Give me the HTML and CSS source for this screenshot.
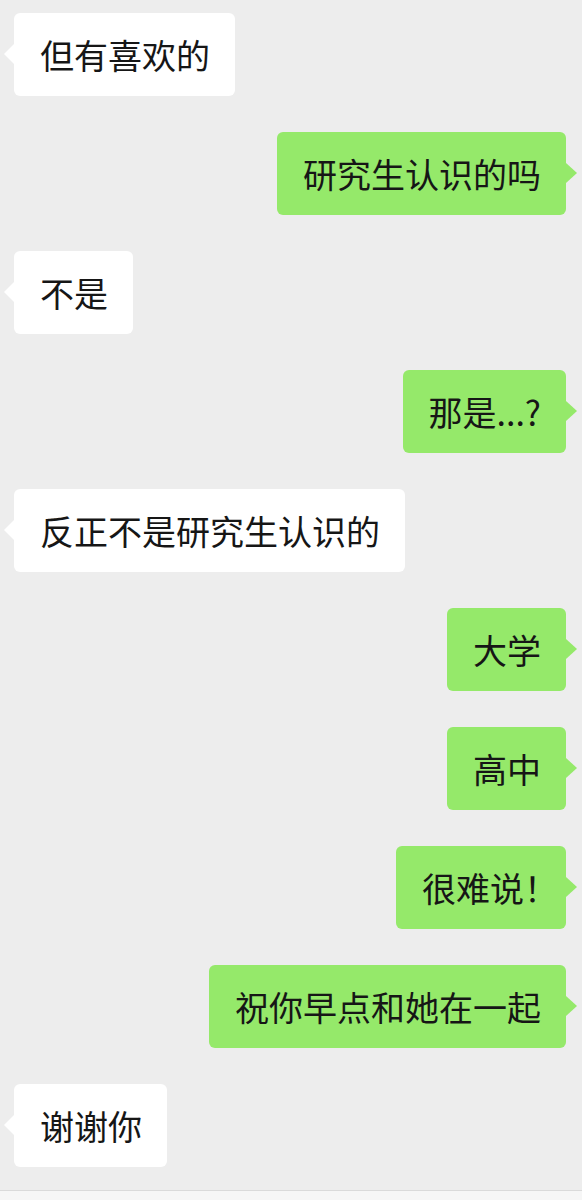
FILE: index.html
```html
<!DOCTYPE html>
<html lang="zh-CN">
<head>
<meta charset="utf-8">
<title>聊天</title>
<link rel="stylesheet" href="styles.css">
</head>
<body>
<div class="page">
  <div class="chat">
    <div class="row left"><div class="bubble">但有喜欢的</div></div>
    <div class="row right"><div class="bubble">研究生认识的吗</div></div>
    <div class="row left"><div class="bubble">不是</div></div>
    <div class="row right"><div class="bubble">那是...?</div></div>
    <div class="row left"><div class="bubble">反正不是研究生认识的</div></div>
    <div class="row right"><div class="bubble">大学</div></div>
    <div class="row right"><div class="bubble">高中</div></div>
    <div class="row right"><div class="bubble">很难说<span class="half">！</span></div></div>
    <div class="row right"><div class="bubble">祝你早点和她在一起</div></div>
    <div class="row left"><div class="bubble">谢谢你</div></div>
  </div>
  <div class="inputbar"></div>
</div>
</body>
</html>
```
FILE: styles.css
```css
html, body {
  margin: 0;
  padding: 0;
  background: #ededed;
}

.page {
  height: 1200px;
  display: flex;
  flex-direction: column;
  overflow: hidden;
  font-family: "Noto Sans CJK SC", "Noto Sans", sans-serif;
}

.chat {
  flex: 1;
  display: flex;
  flex-direction: column;
  gap: 36px;
  padding: 13px 16px 0 14px;
}

.row {
  display: flex;
}

.row.left {
  justify-content: flex-start;
}

.row.right {
  justify-content: flex-end;
}

.bubble {
  position: relative;
  height: 83px;
  box-sizing: border-box;
  padding: 18px 25px 18px 26px;
  font-size: 34px;
  line-height: 47px;
  color: #161616;
  border-radius: 6px;
  white-space: nowrap;
}

.left .bubble {
  background: #ffffff;
}

.right .bubble {
  background: #95e96a;
}

.bubble::before {
  content: "";
  position: absolute;
  top: 31px;
  width: 0;
  height: 0;
  border-top: 10px solid transparent;
  border-bottom: 10px solid transparent;
}

.left .bubble::before {
  left: -10px;
  border-right: 10px solid #ffffff;
}

.right .bubble::before {
  right: -11px;
  border-left: 11px solid #95e96a;
}

.half {
  font-feature-settings: "halt";
}

.inputbar {
  height: 60px;
  flex: none;
  margin-bottom: -51px;
  background: #f6f6f6;
  border-top: 1px solid #dadada;
}
```
